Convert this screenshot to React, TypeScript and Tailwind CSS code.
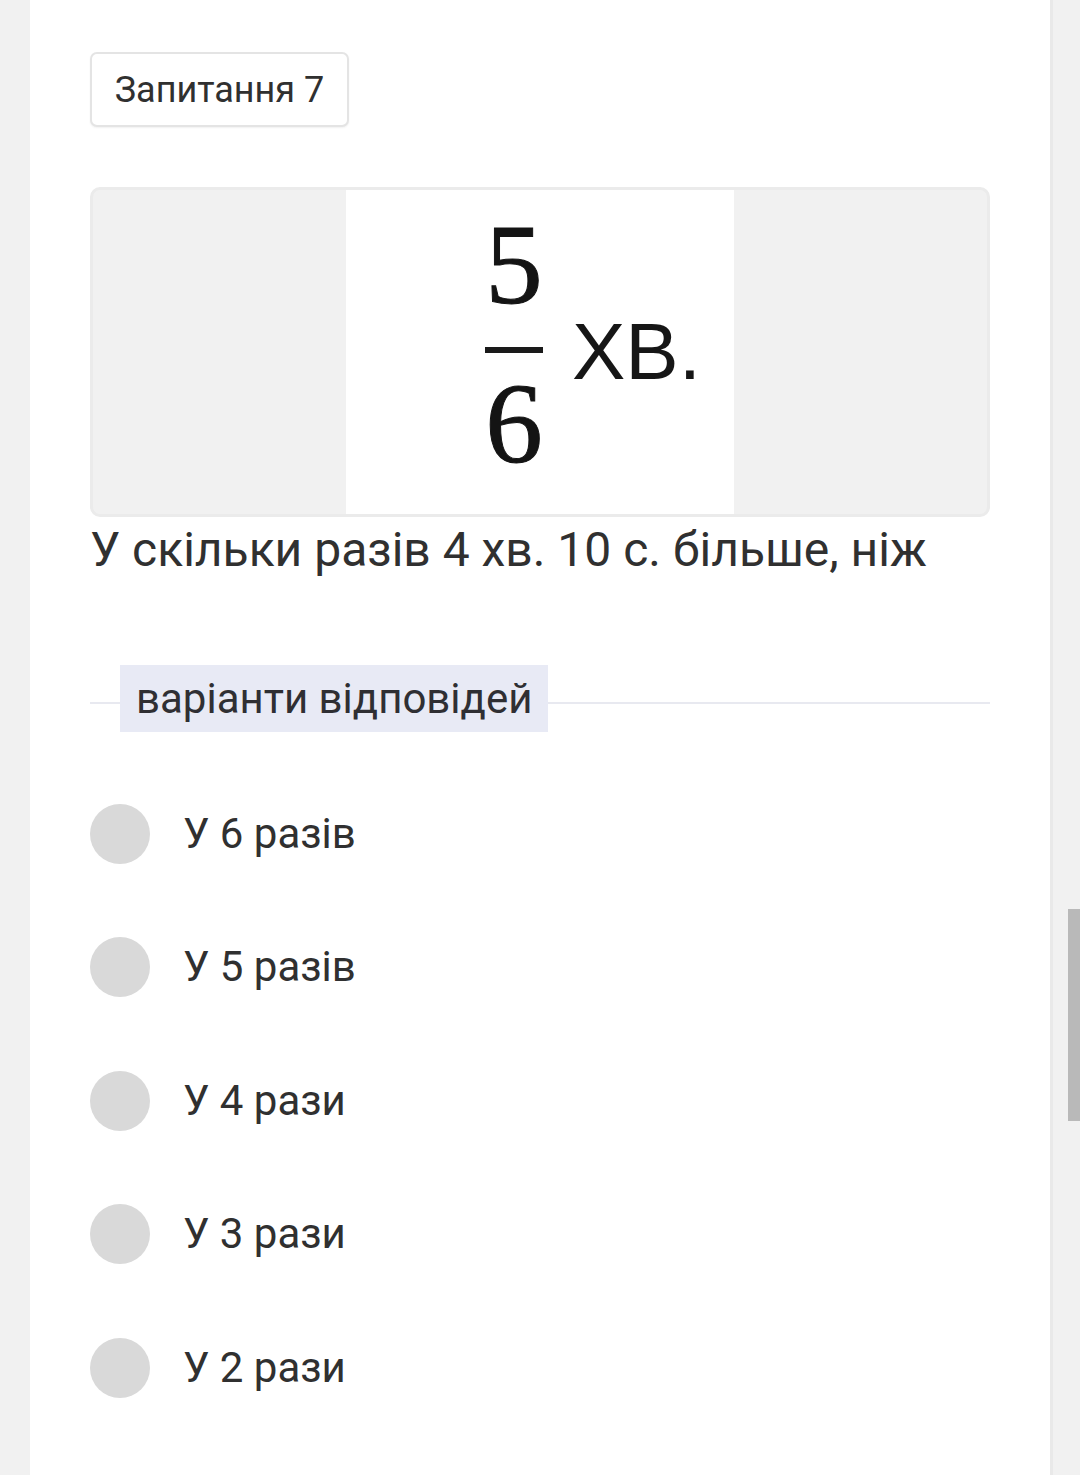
import React from "react";

const options = ["У 6 разів", "У 5 разів", "У 4 рази", "У 3 рази", "У 2 рази"];

export default function App() {
  return (
    <div
      className="flex h-[1475px] w-[1080px] overflow-hidden bg-[#f1f1f1]"
      style={{ fontFamily: "Roboto, 'Noto Sans', sans-serif" }}
    >
      <div className="w-[30px] shrink-0" />
      <div className="flex w-[1023px] shrink-0 flex-col border-r-[3px] border-[#e9e9e9] bg-white pl-[60px] pr-[60px]">
        <div className="mt-[52px] flex h-[75px] w-[259px] items-center justify-center rounded-[7px] border-2 border-[#e4e4e4] bg-white shadow-[0_1px_2px_rgba(0,0,0,0.06)]">
          <span className="text-[36px] leading-none text-[#303030]">Запитання 7</span>
        </div>

        <div className="mt-[60px] flex h-[330px] w-[900px] justify-center rounded-[10px] border-[3px] border-[#ebebeb] bg-[#f1f1f1]">
          <div className="flex h-full w-[388px] items-start bg-white pl-[139px] blur-[0.4px]">
            <div
              className="flex flex-col items-center pt-[17px]"
              style={{ fontFamily: "'Liberation Serif', 'Times New Roman', serif" }}
            >
              <span className="text-[115px] leading-none text-[#141414] [-webkit-text-stroke:1px_#141414]">5</span>
              <div className="mt-[25px] h-[6px] w-[58px] bg-[#1a1a1a]" />
              <span className="mt-[13px] text-[115px] leading-none text-[#141414] [-webkit-text-stroke:1px_#141414]">6</span>
            </div>
            <span
              className="ml-[29px] mt-[122px] text-[80px] leading-none text-[#161616]"
              style={{ fontFamily: "'Liberation Sans', Arial, sans-serif" }}
            >
              ХВ.
            </span>
          </div>
        </div>

        <p className="mt-[5px] text-[48px] leading-[56px] text-[#303030]">
          У скільки разів 4 хв. 10 с. більше, ніж
        </p>

        <div className="relative mt-[87px] flex h-[67px] items-center">
          <div className="absolute left-0 right-0 top-[37px] h-[2px] bg-[#e8e9f0]" />
          <div className="relative ml-[30px] flex h-[67px] items-center bg-[#e8eaf5] px-[16px]">
            <span className="text-[42px] leading-none text-[#2f2f33]">варіанти відповідей</span>
          </div>
        </div>

        <div className="mt-[35px] flex flex-col">
          {options.map((o) => (
            <div key={o} className="flex h-[133.5px] items-center">
              <div className="h-[60px] w-[60px] shrink-0 rounded-full bg-[#d9d9d9]" />
              <span className="ml-[33px] text-[42px] leading-none text-[#303030]">{o}</span>
            </div>
          ))}
        </div>
      </div>
      <div className="flex flex-1 justify-end">
        <div className="mt-[909px] h-[212px] w-[12px] bg-[#b9b9b9]" />
      </div>
    </div>
  );
}
